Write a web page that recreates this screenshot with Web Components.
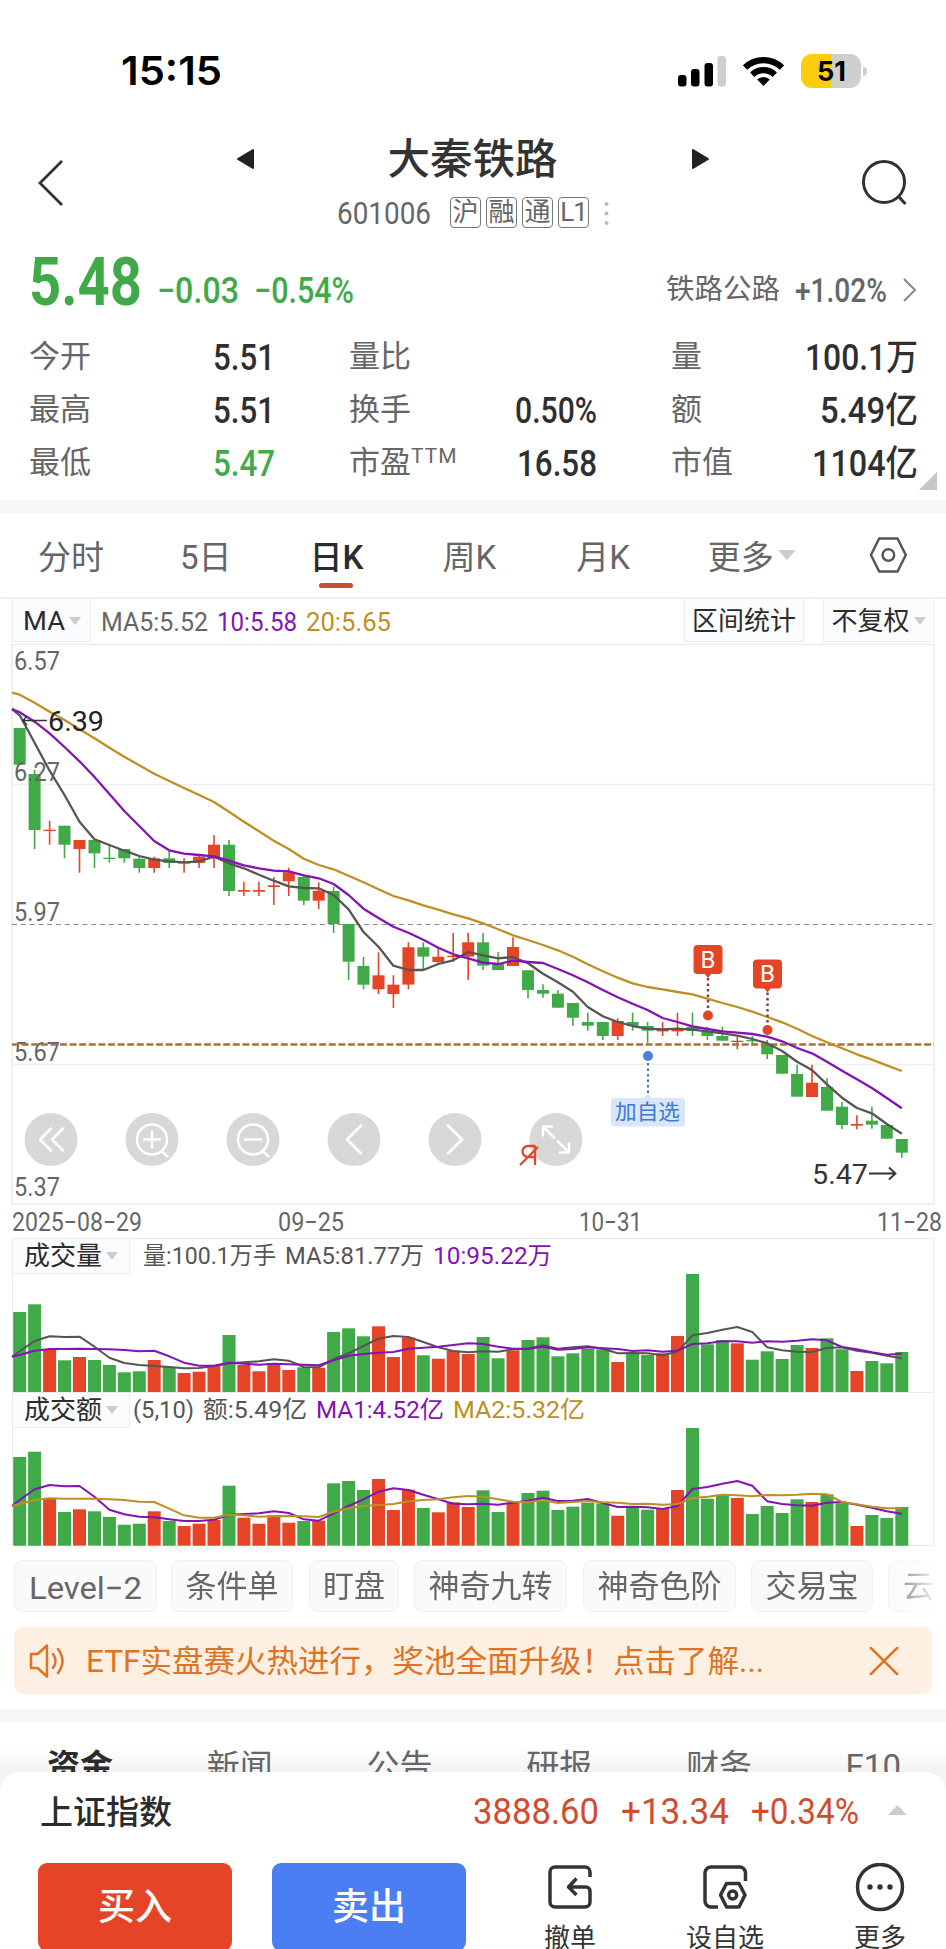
<!DOCTYPE html>
<html lang="zh-CN">
<head>
<meta charset="UTF-8">
<title>大秦铁路 601006</title>
<style>
  html, body { margin: 0; padding: 0; }
  body {
    width: 946px;
    height: 1949px;
    overflow: hidden;
    background: #fff;
    color: #333;
    font-family: Roboto, "Noto Sans CJK SC", sans-serif;
    --up: #e54526;
    --down: #41aa48;
    --purple: #8512b5;
    --gold: #be8f22;
  }
</style>
</head>
<body>
<stock-app></stock-app>

<script>
const GREEN = '#41aa48';
const RED = '#e54526';

function mount(el, html) {
  el.attachShadow({ mode: 'open' }).innerHTML = html;
}

class FitText extends HTMLElement {
  connectedCallback() {
    const w = this.getAttribute('w');
    mount(this, `
      <style>
        :host { display: block; flex: none; line-height: 0; }
        svg { display: block; height: 1em; overflow: visible; }
      </style>
      <svg width="${w}"><text x="0" y=".855em" fill="currentColor" textLength="${w}" lengthAdjust="spacingAndGlyphs">${this.textContent}</text></svg>
    `);
  }
}

class StatusBar extends HTMLElement {
  connectedCallback() {
    mount(this, `
      <style>
        :host { display: flex; align-items: center; height: 82px; padding: 30px 79px 0 121px; color: #000; }
        .time { font: 600 40px Inter, sans-serif; margin-right: auto; }
        svg { display: block; }
        .wifi { margin: 0 17px 0 16px; }
        .battery {
          width: 60px; height: 34px; border-radius: 11px;
          background: linear-gradient(90deg, #fbcd0c 50%, #cfcfcf 50%);
          display: flex; align-items: center; justify-content: center;
          font: 700 27px Inter, sans-serif;
        }
        .nub { width: 4px; height: 9px; margin-left: 2px; background: #cfcfcf; border-radius: 0 4px 4px 0; }
      </style>
      <fit-text class="time" w="101">15:15</fit-text>
      <svg width="49" height="31" viewBox="0 0 49 31">
        <rect x="0" y="19" width="8.500" height="11.500" rx="3"/>
        <rect x="13" y="13" width="8.500" height="17.500" rx="3"/>
        <rect x="26.5" y="7" width="8.500" height="23.500" rx="3"/>
        <rect x="39.500" y="0" width="8.500" height="30.500" rx="3" fill="#cfcfcf"/>
      </svg>
      <svg class="wifi" width="41" height="30" viewBox="0 0 41 30">
        <g fill="none" stroke="#000" stroke-width="6.2">
          <path d="M2 11.6a26.5 26.5 0 0 1 37 0"/>
          <path d="M9.2 18.7a16.5 16.5 0 0 1 22.6 0"/>
        </g>
        <path d="M20.5 30l-6.3-6.5a9 9 0 0 1 12.6 0z"/>
      </svg>
      <div class="battery"><fit-text w="29">51</fit-text></div>
      <div class="nub"></div>
    `);
  }
}

class StockHeader extends HTMLElement {
  connectedCallback() {
    mount(this, `
      <style>
        :host { display: grid; grid-template-columns: 38px minmax(0, 1fr) 48px; align-items: center; height: 139px; padding: 0 38px 0 34px; box-sizing: border-box; }
        svg { display: block; }
        .search { margin-top: 3px; }
        .back { margin-top: 2px; }
        .middle { padding: 10px 0 0 11px; }
        .name { display: flex; align-items: center; justify-content: center; height: 52px; font-size: 42.5px; font-weight: 500; width: 780px; }
        .name svg { margin-top: -1px; }
        .name span { margin: 0 134px 0 133px; line-height: 55px; }
        .meta { display: flex; align-items: center; height: 54px; padding-left: 254px; font-size: 31px; color: #666; }
        .meta fit-text { margin-right: 19px; }
        .tag { margin-right: 5px; border: 1.5px solid #777; border-radius: 4px; font-size: 26px; line-height: 29px; text-align: center; box-sizing: border-box; width: 31px; height: 31px; }
        .tag.l { letter-spacing: -1px; }
        .dots { margin-left: 10px; }
      </style>
      <svg class="back" width="30" height="48" viewBox="0 0 30 48" fill="none" stroke="#333" stroke-width="2.8"><path d="M28 2L6 24l22 22"/></svg>
      <div class="middle">
        <div class="name">
          <svg width="18" height="20"><path d="M17 1v18L2 10z" fill="#222" stroke="#222" stroke-width="2" stroke-linejoin="round"/></svg>
          <span>大秦铁路</span>
          <svg width="18" height="20"><path d="M1 1v18l15-9z" fill="#222" stroke="#222" stroke-width="2" stroke-linejoin="round"/></svg>
        </div>
        <div class="meta">
          <fit-text w="94">601006</fit-text>
          <div class="tag">沪</div><div class="tag">融</div><div class="tag">通</div><div class="tag l">L1</div>
          <svg class="dots" width="5" height="24" fill="#bbb"><circle cx="2.5" cy="3" r="2"/><circle cx="2.5" cy="12.5" r="2"/><circle cx="2.5" cy="22" r="2"/></svg>
        </div>
      </div>
      <svg class="search" width="48" height="48" viewBox="0 0 48 48" fill="none" stroke="#333" stroke-width="3"><circle cx="24" cy="23" r="20.500"/><path d="M38 37l7.500 8"/></svg>
    `);
  }
}

class StatItem extends HTMLElement {
  connectedCallback() {
    const sup = this.getAttribute('sup') || '';
    const value = this.getAttribute('value');
    mount(this, `
      <style>
        :host { display: flex; align-items: center; height: 53px; font-size: 31px; color: #666; }
        .label { margin-right: auto; display: flex; line-height: 53px; }
        sup { font-size: 21px; line-height: 40px; height: 30px; letter-spacing: 1px; }
        fit-text { font-size: 36px; font-weight: 500; color: ${this.getAttribute('color') || '#2f2f2f'}; }
      </style>
      <div class="label"><slot></slot>${sup ? `<sup>${sup}</sup>` : ''}</div>
      ${value ? `<fit-text w="${this.getAttribute('w')}">${value}</fit-text>` : ''}
    `);
  }
}

class QuotePanel extends HTMLElement {
  connectedCallback() {
    mount(this, `
      <style>
        :host { display: block; height: 249px; border-bottom: 13px solid #f6f6f6; }
        .price { display: flex; align-items: center; height: 79px; padding: 0 29px 21px 29px; box-sizing: border-box; color: var(--down); font-size: 36px; }
        .now { font-size: 66px; font-weight: 700; margin-right: 15px; padding-top: 3px; }
        .chg { margin-right: 15px; padding-top: 19px; font-weight: 500; }
        .sector { display: flex; align-items: center; margin-left: auto; padding-top: 19px; color: #666; font-size: 28.5px; line-height: 36px; }
        .sector fit-text { font-size: 34px; font-weight: 500; margin: 0 15px 0 15px; }
        .stats { display: grid; grid-template-columns: 246px 248px 247px; column-gap: 74px; padding-left: 29px; }
        .col { display: flex; flex-direction: column; }
        .fold { display: block; margin: -17px 9px 0 auto; }
      </style>
      <div class="price">
        <fit-text class="now" w="113">5.48</fit-text>
        <fit-text class="chg" w="82">−0.03</fit-text>
        <fit-text class="chg" w="100">−0.54%</fit-text>
        <div class="sector">铁路公路<fit-text w="92">+1.02%</fit-text>
          <svg width="15" height="24" fill="none" stroke="#888" stroke-width="2"><path d="M2 1l11 11L2 23"/></svg>
        </div>
      </div>
      <div class="stats">
        <div class="col">
          <stat-item value="5.51" w="62">今开</stat-item>
          <stat-item value="5.51" w="62">最高</stat-item>
          <stat-item value="5.47" w="62" color="${GREEN}">最低</stat-item>
        </div>
        <div class="col">
          <stat-item>量比</stat-item>
          <stat-item value="0.50%" w="82">换手</stat-item>
          <stat-item value="16.58" w="80" sup="TTM">市盈</stat-item>
        </div>
        <div class="col">
          <stat-item value="100.1万" w="113">量</stat-item>
          <stat-item value="5.49亿" w="98">额</stat-item>
          <stat-item value="1104亿" w="106">市值</stat-item>
        </div>
      </div>
      <svg class="fold" width="18" height="18"><path d="M18 0v18H0z" fill="#c6c6c6"/></svg>
    `);
  }
}

class PeriodTabs extends HTMLElement {
  connectedCallback() {
    mount(this, `
      <style>
        :host { display: flex; align-items: center; height: 86px; padding: 0 38px; border-bottom: 2px solid #efefef; font-size: 33px; color: #666; box-sizing: border-box; }
        .tab { height: 84px; line-height: 89px; white-space: nowrap; }
        .on { color: #2b2b2b; font-weight: 500; display: flex; flex-direction: column; align-items: center; }
        .on::after { content: ''; width: 34px; height: 5px; border-radius: 3px; background: #c8502f; margin-top: -19px; flex: none; }
        .arrow { margin: 0 74px 0 4px; }
      </style>
      <div class="tab" style="margin-right:76px">分时</div>
      <div class="tab" style="margin-right:78px">5日</div>
      <div class="tab on" style="margin-right:79px">日K</div>
      <div class="tab" style="margin-right:80px">周K</div>
      <div class="tab" style="margin-right:78px">月K</div>
      <div class="tab">更多</div>
      <svg class="arrow" width="18" height="10"><path d="M0 0h18l-9 10z" fill="#ccc"/></svg>
      <svg width="40" height="38" viewBox="0 0 40 38" fill="none" stroke="#555" stroke-width="2.5"><path d="M10.500 2h19L38 19l-8.500 17h-19L2 19z" stroke-linejoin="round"/><circle cx="20" cy="19" r="6"/></svg>
    `);
  }
}

// Small grey picker with a drop arrow, used in the chart headings
class PickBox extends HTMLElement {
  connectedCallback() {
    mount(this, `
      <style>
        :host { display: flex; align-items: center; justify-content: center; flex: none; background: #fbfcfe; border: 1px solid #ededf0; border-top: 0; box-sizing: border-box; color: #2b2b2b; font-size: 26px; line-height: 30px; white-space: nowrap; }
        svg { margin-left: 4px; }
      </style>
      <slot></slot>${this.hasAttribute('plain') ? '' : '<svg width="12" height="8"><path d="M0 0h12L6 8z" fill="#ccc"/></svg>'}
    `);
  }
}

const X0 = 19.7;
const STEP = 14.95;
const colX = i => X0 + i * STEP;

// heights are kept in thirds of a pixel
function trace(ys, top, color, width = 2.3) {
  const pts = ys.map((y, i) => `${i ? colX(i - 1).toFixed(1) : 12},${(top + y / 3).toFixed(1)}`);
  return `<polyline points="${pts.join(' ')}" fill="none" stroke="${color}" stroke-width="${width}" stroke-linejoin="round"/>`;
}

function label(x, y, w, size, text, color = '#666', extra = '') {
  return `<text x="${x}" y="${y}" font-size="${size}" fill="${color}" textLength="${w}" lengthAdjust="spacingAndGlyphs" ${extra}>${text}</text>`;
}

// [up?, body top, body bottom, high, low]
const candles = [
  [0,264,374,264,374],[0,402,570,390,627],[1,569,573,542,614],[0,557,614,557,655],[1,600,627,600,698],
  [0,600,640,600,684],[0,653,657,615,668],[0,627,655,627,668],[0,656,684,650,698],[1,655,684,650,698],
  [0,655,669,628,684],[1,667,671,655,698],[1,650,669,645,684],[1,614,655,585,684],[0,614,753,600,768],
  [1,750,755,725,768],[1,750,755,725,768],[1,736,741,711,795],[1,697,724,683,768],[0,711,782,705,795],
  [1,752,782,727,808],[0,753,852,740,879],[0,852,965,852,1020],[0,978,1034,951,1048],[1,1006,1048,937,1062],
  [1,1034,1062,1006,1104],[1,922,1034,907,1048],[0,922,950,907,992],[1,950,966,925,970],[1,947,951,879,965],
  [1,907,950,879,1020],[0,907,977,879,990],[0,972,990,936,990],[1,921,978,892,978],[0,991,1050,991,1075],
  [0,1050,1061,1033,1073],[0,1061,1103,1050,1103],[0,1089,1133,1089,1157],[0,1146,1157,1118,1172],[0,1146,1188,1146,1200],
  [1,1143,1188,1135,1200],[0,1146,1157,1118,1172],[0,1158,1172,1146,1210],[1,1169,1174,1146,1188],[1,1169,1174,1118,1188],
  [0,1160,1173,1118,1188],[0,1173,1188,1160,1200],[0,1188,1202,1160,1202],[1,1202,1206,1190,1228],[0,1200,1204,1188,1216],
  [0,1215,1243,1200,1257],[0,1245,1301,1245,1301],[0,1302,1370,1274,1370],[1,1328,1371,1274,1371],[0,1341,1412,1315,1412],
  [0,1400,1455,1386,1468],[1,1452,1457,1426,1468],[0,1442,1454,1400,1466],[0,1455,1496,1455,1496],[0,1497,1538,1497,1553]
];
const ma5 = [207,226,308,392,465,545,598,615,632,648,659,664,667,664,650,670,685,704,722,739,744,745,765,808,876,920,977,990,990,972,961,936,946,955,951,970,1001,1027,1055,1101,1129,1146,1158,1166,1168,1166,1169,1174,1180,1187,1197,1210,1233,1265,1290,1333,1373,1404,1420,1452,1481];
const ma10 = [207,217,245,280,321,364,411,462,513,558,603,631,641,645,649,662,676,685,692,694,706,715,732,765,806,834,860,878,899,923,943,955,968,972,962,966,969,987,1006,1027,1050,1072,1091,1110,1134,1146,1159,1167,1174,1178,1182,1190,1204,1224,1240,1265,1292,1318,1344,1374,1405];
const ma20 = [158,164,188,215,240,268,295,323,350,376,401,423,444,465,486,515,545,574,602,627,656,675,688,707,727,748,768,781,796,809,823,835,850,868,886,900,915,931,950,973,994,1013,1030,1041,1048,1056,1063,1076,1089,1101,1115,1131,1147,1166,1188,1207,1225,1243,1259,1276,1293];

const icons = [
  'M0-11l-11 11 11 11M12-11L1 0l11 11',
  'M-15 0a15 15 0 1 0 30 0a15 15 0 1 0-30 0M9.500 11.500L15.500 17M-8 0H8M0-8V8',
  'M-15 0a15 15 0 1 0 30 0a15 15 0 1 0-30 0M9.500 11.500L15.500 17M-8 0H8',
  'M7-14L-7 0 7 14',
  'M-7-14L7 0-7 14',
  'M-2-2L-13-13M-13-4v-9h9M2 2l11 11M4 13h9v-9'
];

class KlineChart extends HTMLElement {
  connectedCallback() {
    const bars = candles.map(([up, t, b, h, l], i) => {
      const x = colX(i).toFixed(1), c = up ? RED : GREEN;
      const y = z => (640 + z / 3).toFixed(1);
      return `<path d="M${x} ${y(h)}V${y(l)}" stroke="${c}" stroke-width="1.600"/><rect x="${(x - 6).toFixed(1)}" y="${y(t)}" width="12" height="${((b - t) / 3).toFixed(1)}" fill="${c}"/>`;
    }).join('');

    const buttons = icons.map((d, i) => `
      <g transform="translate(${51 + i * 101} 1139.500)">
        <circle r="26.500" fill="#d4d4d4" fill-opacity=".9"/>
        <path d="${d}" fill="none" stroke="#fff" stroke-width="2.500" stroke-linecap="round" stroke-linejoin="round"/>
      </g>`).join('');

    const buyMark = (x, y) => `
      <rect x="${x - 14.5}" y="${y}" width="29" height="29" rx="4" fill="${RED}"/>
      <path d="M${x - 4} ${y + 28}h8l-4 5z" fill="${RED}"/>
      <path d="M${x} ${y + 33}v34" stroke="#804040" stroke-width="2.500" stroke-dasharray="2.500 3"/>
      <circle cx="${x}" cy="${y + 70.5}" r="5" fill="${RED}"/>
      <text x="${x}" y="${y + 22.5}" font-size="24" text-anchor="middle" fill="#fff">B</text>`;

    mount(this, `
      <style>
        :host { display: block; height: 639px; }
        .head { display: flex; align-items: center; height: 44px; padding: 0 12px; font-size: 25px; color: #666; }
        .head > pick-box { align-self: flex-start; height: 43px; padding-top: 2px; }
        .ma { width: 79px; margin-right: 10px; font-size: 25px; }
        .area { width: 120px; margin: 0 19px 0 auto; }
        .adj { width: 111px; }
        .head > fit-text { margin: 2px 9px 0 0; }
        svg { display: block; }
      </style>
      <div class="head">
        <pick-box class="ma"><fit-text w="42">MA</fit-text></pick-box>
        <fit-text w="107">MA5:5.52</fit-text>
        <fit-text w="80" style="color:var(--purple)">10:5.58</fit-text>
        <fit-text w="85" style="color:var(--gold)">20:5.65</fit-text>
        <pick-box class="area" plain>区间统计</pick-box>
        <pick-box class="adj">不复权</pick-box>
      </div>
      <svg width="946" height="595" viewBox="0 643 946 595">
        <path d="M12 644.500H934V1204H12z" fill="none" stroke="#ececec" stroke-width="1.500"/>
        <path d="M12 784.500H934M12 1064.500H934" stroke="#efefef" stroke-width="1.300"/>
        <path d="M12 924.500H934" stroke="#8a8a8a" stroke-width="1.200" stroke-dasharray="5 3.800"/>
        ${bars}
        ${label(14, 781, 46, 25, '6.27')}
        ${label(14, 1061, 46, 25, '5.67')}
        <path d="M12 1044.500H934" stroke="#a87332" stroke-width="2.600" stroke-dasharray="7 2.600"/>
        ${trace(ma20, 640, '#be8f22')}
        ${trace(ma5, 640, '#555')}
        ${trace(ma10, 640, '#8512b5')}
        ${label(14, 670, 46, 25, '6.57')}
        ${label(14, 921, 46, 25, '5.97')}
        ${label(14, 1196, 46, 25, '5.37')}
        <path d="M23 720.500H47M27 716l-4 4.500 4 4.500" fill="none" stroke="#333" stroke-width="1.300"/>
        ${label(48, 731, 56, 28, '6.39', '#222')}
        ${buttons}
        <g fill="none" stroke="#dc4a28" stroke-width="2.300"><path d="M535 1165V1145.500M535 1146h-7a5.500 5.500 0 0 0 0 11h7M520 1165L538 1147"/></g>
        ${buyMark(708, 945)}
        ${buyMark(767.5, 959.5)}
        <circle cx="648" cy="1056" r="5" fill="#4a7fdc"/>
        <path d="M648 1063v30" stroke="#4377b5" stroke-width="2" stroke-dasharray="2.500 3"/>
        <path d="M643 1099l5-5 5 5z" fill="#d9e6fa"/>
        <rect x="611" y="1098" width="74" height="28.500" rx="3" fill="#d9e6fa"/>
        ${label(615, 1118.5, 65, 21, '加自选', '#3f79cf')}
        ${label(812, 1184, 56, 28, '5.47', '#333')}
        <path d="M869 1173.500H895M889 1167.500l6.500 6-6.500 6" fill="none" stroke="#333" stroke-width="1.800"/>
        ${label(12, 1231, 130, 26, '2025−08−29')}
        ${label(278, 1231, 66, 26, '09−25')}
        ${label(579, 1231, 63, 26, '10−31')}
        ${label(877, 1231, 65, 26, '11−28')}
      </svg>
    `);
  }
}

const volume = {
  bars: [276,253,388,421,411,420,435,457,454,420,441,459,455,438,345,435,454,429,450,442,443,336,325,349,319,411,353,406,416,392,402,351,415,391,360,352,409,400,386,388,426,400,405,400,348,160,373,360,370,419,394,417,375,384,355,388,453,423,430,396],
  fast: [410,394,363,349,351,350,380,413,429,435,438,441,445,444,438,430,427,424,418,422,441,442,418,400,378,356,348,351,366,382,393,397,394,395,388,386,376,386,382,379,386,400,399,400,406,395,346,339,329,321,336,382,391,395,396,384,382,392,398,407,415],
  slow: [410,405,392,387,387,386,387,388,390,394,392,409,428,437,437,428,431,434,431,433,434,436,421,407,402,398,396,386,383,380,375,370,372,380,386,386,380,389,387,382,385,387,393,391,395,392,372,370,364,364,368,364,365,362,358,361,381,388,397,404,401]
};
const amount = {
  bars: [711,695,836,876,868,874,891,914,911,874,903,918,911,900,797,893,911,886,908,903,902,790,783,810,777,870,809,864,877,847,861,811,876,849,819,812,870,860,848,850,887,864,869,866,810,622,836,824,834,882,858,879,838,846,823,850,918,885,894,861],
  fast: [858,840,808,795,799,798,830,869,883,890,892,898,903,903,899,884,882,880,874,879,898,902,880,858,838,815,805,810,824,838,851,853,851,854,848,842,833,843,842,837,849,861,860,862,867,858,807,801,791,783,797,844,852,856,857,848,846,854,863,874,881],
  slow: [858,852,840,835,836,836,836,838,840,845,846,866,886,893,893,884,886,890,889,888,889,891,875,865,858,855,852,844,840,838,832,828,830,838,845,847,841,849,846,843,847,848,852,851,854,852,834,830,824,826,829,825,826,824,821,823,846,853,860,865,865]
};

class BarPane extends HTMLElement {
  connectedCallback() {
    const isVol = this.getAttribute('kind') === 'volume';
    const data = isVol ? volume : amount;
    const base = isVol ? 516 : 977;
    const bars = data.bars.map((z, i) =>
      `<rect x="${(colX(i) - 6.5).toFixed(1)}" y="${(1220 + z / 3).toFixed(1)}" width="13" height="${((base - z) / 3).toFixed(1)}" fill="${candles[i][0] ? RED : GREEN}"/>`).join('');
    mount(this, `
      <style>
        :host { display: block; height: 154px; box-sizing: border-box; border: solid #ececec; border-width: 1px 1px 0 1px; margin-left: 12px; width: 922px; }
        :host([kind=amount]) { border-bottom-width: 1px; }
        .head { display: flex; align-items: center; height: 35px; font-size: 24px; color: #555; }
        pick-box { width: 117px; height: 35px; margin-right: ${isVol ? 13 : 3}px; border-left: 0; }
        svg { display: block; margin-left: -13px; }
        ::slotted(fit-text) { margin: -4px 9px 0 0; }
      </style>
      <div class="head"><pick-box>${this.getAttribute('name')}</pick-box><slot></slot></div>
      <svg width="946" height="118" viewBox="0 ${isVol ? 1274 : 1428} 946 118">
        ${bars}
        ${trace(data.fast, 1220, isVol ? '#555' : '#8512b5', 2)}
        ${trace(data.slow, 1220, isVol ? '#8512b5' : '#be8f22', 2)}
      </svg>
    `);
  }
}

class ToolChips extends HTMLElement {
  connectedCallback() {
    const chips = [['Level−2', 143, 14, 113], ['条件单', 122, 16], ['盯盘', 90, 15], ['神奇九转', 153, 16], ['神奇色阶', 153, 15], ['交易宝', 122, 15]];
    mount(this, `
      <style>
        :host { display: flex; height: 52px; margin: 14px 0 0 14px; width: 932px; overflow: hidden; font-size: 31px; color: #666;
          -webkit-mask-image: linear-gradient(90deg, #000 870px, transparent 926px); }
        div { flex: none; display: flex; align-items: center; justify-content: center; box-sizing: border-box; padding-top: 2px; background: #fafafa; border: 1.5px solid #f0f0f0; border-radius: 9px; line-height: 48px; white-space: nowrap; }
        .last { width: 70px; justify-content: flex-start; padding-left: 14px; }
      </style>
      ${chips.map(([t, w, gap, fit]) => `<div style="width:${w}px;margin-right:${gap}px">${fit ? `<fit-text w="${fit}">${t}</fit-text>` : t}</div>`).join('')}
      <div class="last">云</div>
    `);
  }
}

class NoticeBar extends HTMLElement {
  connectedCallback() {
    mount(this, `
      <style>
        :host { display: flex; align-items: center; height: 67px; margin: 15px 14px 0; padding: 0 33px 0 15px; border-radius: 9px; background: #feefe3; color: #dc7424; font-size: 31px; }
        fit-text { margin: 0 auto 0 19px; }
      </style>
      <svg width="38" height="36" viewBox="0 0 38 36" fill="none" stroke="currentColor" stroke-width="2.500" stroke-linejoin="round"><path d="M2 11h6.500L18 2.500v31L8.500 25H2zM24 11q5 7 0 14M29 6q9 12 0 24" stroke-linecap="round"/></svg>
      <fit-text w="678">ETF实盘赛火热进行，奖池全面升级！点击了解...</fit-text>
      <svg width="30" height="28" stroke="currentColor" stroke-width="2.500"><path d="M1 0l28 28M29 0L1 28"/></svg>
    `);
  }
}

class InfoTabs extends HTMLElement {
  connectedCallback() {
    mount(this, `
      <style>
        :host { display: block; height: 63px; margin-top: 15px; border-top: 13px solid #f6f6f6; box-sizing: border-box; overflow: hidden; }
        nav { display: flex; justify-content: space-between; height: 50px; padding: 20px 45px 0 47px; box-sizing: border-box; font-size: 33px; line-height: 50px; color: #666; background: linear-gradient(#fff 50%, #f3f3f3); }
        b { color: #2b2b2b; font-weight: 700; }
      </style>
      <nav><b>资金</b><span>新闻</span><span>公告</span><span>研报</span><span>财务</span><span>F10</span></nav>
    `);
  }
}

class DockAction extends HTMLElement {
  connectedCallback() {
    mount(this, `
      <style>
        :host { display: flex; flex: none; flex-direction: column; align-items: center; color: #333; font-size: 26px; line-height: 36px; white-space: nowrap; }
        svg { display: block; margin-bottom: 7px; }
      </style>
      <svg width="52" height="50" viewBox="0 0 52 50" fill="none" stroke="#333" stroke-width="3.500" stroke-linejoin="round">${this.getAttribute('art')}</svg>
      <slot></slot>
    `);
  }
}

class TradeDock extends HTMLElement {
  connectedCallback() {
    const cancel = `<path d='M46 14V9a5 5 0 0 0-5-5H11a5 5 0 0 0-5 5v30a5 5 0 0 0 5 5h30a5 5 0 0 0 5-5V28a4 4 0 0 0-4-4H25M32.500 15.500L24.500 24l8 8'/>`;
    const custom = `<path d='M46.500 18V10a6 6 0 0 0-6-6H12a6 6 0 0 0-6 6v28a6 6 0 0 0 6 6h7M27.500 20.500h12.500l6 11.500-6 12H27.500l-6-12z'/><circle cx='33.700' cy='32' r='4'/>`;
    const more = `<circle cx='26' cy='24' r='22.500'/><g fill='#333' stroke='none'><circle cx='16' cy='24' r='2.700'/><circle cx='26' cy='24' r='2.700'/><circle cx='36' cy='24' r='2.700'/></g>`;
    mount(this, `
      <style>
        :host { display: block; background: #f3f3f3; }
        .sheet { height: 177px; background: #fff; border-radius: 20px 20px 0 0; overflow: hidden; }
        .index { display: flex; align-items: center; height: 76px; padding: 0 39px 2px 40px; font-size: 33px; color: #2b2b2b; font-weight: 500; }
        .index span { margin-right: auto; }
        .index fit-text { font-size: 37px; font-weight: 400; color: #d24c2e; margin-right: 22px; }
        .index fit-text:last-of-type { margin-right: 29px; }
        .row { display: flex; align-items: flex-start; margin-top: 13px; padding: 0 26px 0 38px; }
        .btn { flex: none; width: 194px; height: 88px; border-radius: 9px; color: #fff; font-size: 37px; font-weight: 500; line-height: 90px; text-align: center; margin-right: 40px; }
        .buy { background: var(--up); }
        .sell { background: #4b7ef2; }
        dock-action { width: 80px; }
      </style>
      <div class="sheet">
        <div class="index"><span>上证指数</span>
          <fit-text w="126">3888.60</fit-text><fit-text w="108">+13.34</fit-text><fit-text w="108">+0.34%</fit-text>
          <svg width="19" height="10"><path d="M9.500 0L19 10H0z" fill="#ccc"/></svg>
        </div>
        <div class="row">
          <div class="btn buy">买入</div>
          <div class="btn sell">卖出</div>
          <dock-action art="${cancel}" style="margin:0 75px 0 24px">撤单</dock-action>
          <dock-action art="${custom}" style="margin-right:75px">设自选</dock-action>
          <dock-action art="${more}">更多</dock-action>
        </div>
      </div>
    `);
  }
}

class StockApp extends HTMLElement {
  connectedCallback() {
    mount(this, `
      <style>
        :host { display: flex; flex-direction: column; height: 1949px; overflow: hidden; }
        status-bar, stock-header, quote-panel, period-tabs, kline-chart, bar-pane, tool-chips, notice-bar, info-tabs, trade-dock { flex: none; }
        .p { color: var(--purple); }
        .g { color: var(--gold); }
      </style>
      <status-bar></status-bar>
      <stock-header></stock-header>
      <quote-panel></quote-panel>
      <period-tabs></period-tabs>
      <kline-chart></kline-chart>
      <bar-pane kind="volume" name="成交量">
        <fit-text w="133">量:100.1万手</fit-text><fit-text w="139">MA5:81.77万</fit-text><fit-text class="p" w="119">10:95.22万</fit-text>
      </bar-pane>
      <bar-pane kind="amount" name="成交额">
        <fit-text w="61">(5,10)</fit-text><fit-text w="104">额:5.49亿</fit-text><fit-text class="p" w="128">MA1:4.52亿</fit-text><fit-text class="g" w="132">MA2:5.32亿</fit-text>
      </bar-pane>
      <tool-chips></tool-chips>
      <notice-bar></notice-bar>
      <info-tabs></info-tabs>
      <trade-dock></trade-dock>
    `);
  }
}

customElements.define('fit-text', FitText);
customElements.define('status-bar', StatusBar);
customElements.define('stock-header', StockHeader);
customElements.define('stat-item', StatItem);
customElements.define('quote-panel', QuotePanel);
customElements.define('period-tabs', PeriodTabs);
customElements.define('pick-box', PickBox);
customElements.define('kline-chart', KlineChart);
customElements.define('bar-pane', BarPane);
customElements.define('tool-chips', ToolChips);
customElements.define('notice-bar', NoticeBar);
customElements.define('info-tabs', InfoTabs);
customElements.define('dock-action', DockAction);
customElements.define('trade-dock', TradeDock);
customElements.define('stock-app', StockApp);
</script>
</body>
</html>
